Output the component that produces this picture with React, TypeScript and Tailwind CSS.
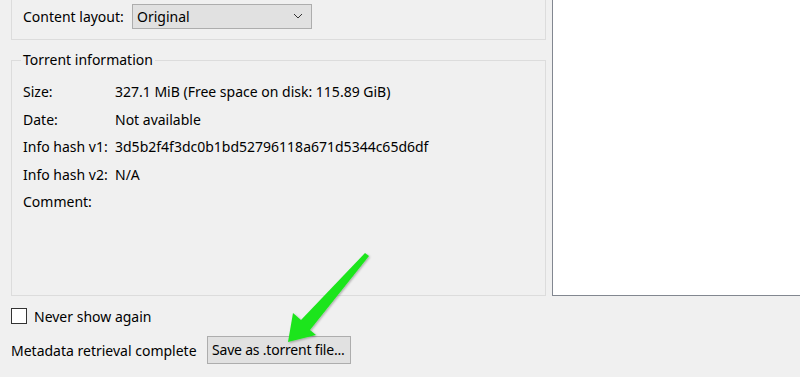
import React from "react";

const rows: [string, string][] = [
  ["Size:", "327.1 MiB (Free space on disk: 115.89 GiB)"],
  ["Date:", "Not available"],
  ["Info hash v1:", "3d5b2f4f3dc0b1bd52796118a671d5344c65d6df"],
  ["Info hash v2:", "N/A"],
  ["Comment:", ""],
];

const Arrow = () => (
  <svg
    className="absolute left-0 top-0 pointer-events-none"
    width="800"
    height="377"
    viewBox="0 0 800 377"
  >
    <defs>
      <filter id="sh" x="-20%" y="-20%" width="140%" height="140%">
        <feDropShadow dx="1" dy="1" stdDeviation="1.2" floodColor="#000" floodOpacity="0.3" />
      </filter>
    </defs>
    <polygon
      points="365,253 369,256 310,330 316,335 288,342 293,313 301,320"
      fill="#1ee51e"
      strokeLinejoin="round"
      filter="url(#sh)"
    />
  </svg>
);

export default function App() {
  return (
    <div
      className="relative w-[800px] h-[377px] overflow-hidden bg-[#f0f0f0] text-[14px] text-black"
      style={{ fontFamily: '"Noto Sans", sans-serif' }}
    >
      <div className="flex h-[296px]">
        <div className="w-[546px] pl-[11px] flex flex-col">
          {/* top group, cut off above */}
          <div className="h-[40px] border-x border-b border-[#dcdcdc] flex items-center pl-[11px] pb-[7px]">
            <span className="w-[109px]">Content layout:</span>
            <div className="w-[180px] h-[25px] border border-[#adadad] bg-[#e1e1e1] flex items-center justify-between pl-[4px] pr-[8px]">
              <span>Original</span>
              <svg width="10" height="6" viewBox="0 0 10 6">
                <path d="M1 1 L5 5 L9 1" fill="none" stroke="#333" strokeWidth="1" />
              </svg>
            </div>
          </div>

          <fieldset className="mt-[10px] h-[246px] border border-[#dcdcdc] pl-[9px] pr-[10px]">
            <legend className="px-[2px] leading-[20px]">Torrent information</legend>
            <div className="pt-[8px]">
              {rows.map(([label, value]) => (
                <div key={label} className="flex leading-[27.5px]">
                  <span className="w-[94px] pl-[2px]">{label}</span>
                  <span>{value}</span>
                </div>
              ))}
            </div>
          </fieldset>
        </div>

        <div className="ml-[6px] flex-1 bg-white border-l border-b border-[#828790]" />
      </div>

      <div className="pl-[11px] pt-[11px] flex flex-col">
        <label className="flex items-center gap-[7px] h-[18px]">
          <span className="w-[16px] h-[16px] border border-[#333] bg-white" />
          <span>Never show again</span>
        </label>
        <div className="flex items-center mt-[11px]">
          <span className="w-[196px]">Metadata retrieval complete</span>
          <button className="w-[144px] h-[28px] pl-[4px] text-left whitespace-nowrap border border-[#adadad] bg-[#e1e1e1] leading-none tracking-[-0.2px]">
            Save as .torrent file...
          </button>
        </div>
      </div>

      <Arrow />
    </div>
  );
}
